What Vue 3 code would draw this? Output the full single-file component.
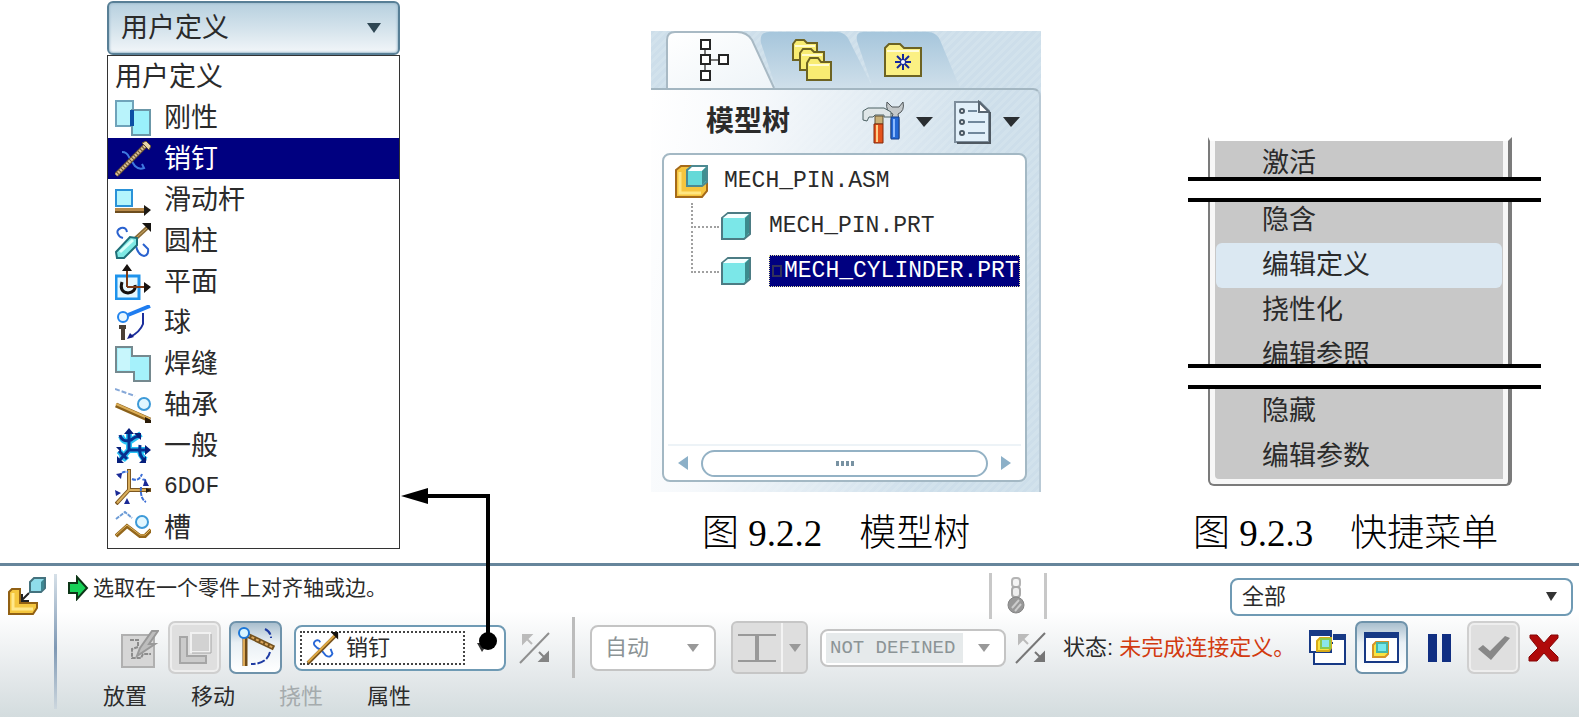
<script setup>
import { ref } from 'vue'

const joints = [
  { name: '用户定义', icon: '' },
  { name: '刚性', icon: 'rigid' },
  { name: '销钉', icon: 'pin' },
  { name: '滑动杆', icon: 'slider' },
  { name: '圆柱', icon: 'cylinder' },
  { name: '平面', icon: 'planar' },
  { name: '球', icon: 'ball' },
  { name: '焊缝', icon: 'weld' },
  { name: '轴承', icon: 'bearing' },
  { name: '一般', icon: 'general' },
  { name: '6DOF', icon: 'dof' },
  { name: '槽', icon: 'slot' }
]
const highlighted = ref('销钉')

const menuParts = [
  { id: 'first', items: ['激活'] },
  { id: 'middle', items: ['隐含', '编辑定义', '挠性化', '编辑参照'] },
  { id: 'last', items: ['隐藏', '编辑参数'] }
]

const panels = [
  { name: '放置' },
  { name: '移动' },
  { name: '挠性', disabled: true },
  { name: '属性' }
]

const icons = {
  rigid: `<rect x="1" y="1" width="17" height="25" fill="#b9f3fb" stroke="#6fa3ba" stroke-width="2"/>
    <rect x="17" y="10" width="18" height="25" fill="#9af0fb" stroke="#6b97a8" stroke-width="2"/>
    <rect x="15" y="10" width="4" height="16" fill="#0b4fa5"/>`,
  pin: `<path d="M7 11q5 0 7 5l6 9q4 4 9 2l-2-4" fill="none" stroke="#3f79e0" stroke-width="2"/>
    <path d="M1 34L31 4" stroke="#6b5332" stroke-width="5"/>
    <path d="M1 34L31 4" stroke="#d8bf94" stroke-width="3" stroke-dasharray="2 1"/>
    <path d="M27 2l4-2 5 5-2 4z" fill="#e6d3a8" stroke="#5c4a30"/>`,
  slider: `<rect x="1" y="8" width="16" height="16" fill="#b4f5fd" stroke="#2a92d8" stroke-width="2"/>
    <rect x="0" y="26" width="30" height="5" fill="#b88a4a"/>
    <path d="M0 30h30" stroke="#6d4d1e" stroke-width="2"/>
    <path d="M29 23l7 5-7 6z" fill="#1e1a14"/>`,
  cylinder: `<path d="M12 9q-1-5-6-4-5 2-3 6 1 3 5 4M21 23q2 9 8 10 5-1 4-7l-5-5" fill="none" stroke="#2a62cf" stroke-width="2"/>
    <path d="M20 16L33 4" stroke="#8a6b36" stroke-width="4"/><path d="M20 16L33 4" stroke="#d7b36a" stroke-width="1"/>
    <path d="M27 0h9v9z" fill="#16130f"/>
    <path d="M1 29L15 14l7 1v7L9 35H2z" fill="#7fe9e4" stroke="#1f6f78" stroke-width="2"/>
    <path d="M5 29L18 17" stroke="#d8fffb" stroke-width="3"/>`,
  planar: `<rect x="1" y="12" width="23" height="23" fill="#e4f8ff" stroke="#1e93ec" stroke-width="3"/>
    <path d="M7 18q-3 10 6 11 8-1 7-8" fill="none" stroke="#14110f" stroke-width="3"/>
    <path d="M12 23V4M12 23h19" stroke="#7a3a16" stroke-width="2"/>
    <path d="M7 7l5-7 5 7zM29 18l7 5-7 6z" fill="#181310"/>`,
  ball: `<path d="M13 10L35 1" stroke="#1f7df0" stroke-width="4"/>
    <circle cx="8" cy="12" r="5" fill="#e8f7ff" stroke="#2385ee" stroke-width="2"/>
    <path d="M4 22h7M8 22v13" stroke="#4a4036" stroke-width="4"/>
    <path d="M28 8v11q-3 8-13 13" fill="none" stroke="#1b2f9c" stroke-width="2"/>
    <path d="M12 34l3-6 4 4z" fill="#15208a"/>`,
  weld: `<path d="M1 1h16v9h18v25H19v-9H1z" fill="#a5f1fb" stroke="#75898f" stroke-width="2"/><path d="M3 3h12v21H3z" fill="#c8f6fc"/>`,
  bearing: `<path d="M0 2l20 7" stroke="#86a8d8" stroke-width="2" stroke-dasharray="5 2"/>
    <circle cx="29" cy="17" r="6" fill="#e1f7ff" stroke="#3d9ad8" stroke-width="2"/>
    <path d="M1 18l34 15" stroke="#8a601a" stroke-width="5"/>
    <path d="M1 17l34 15" stroke="#dcae58" stroke-width="2"/><path d="M30 30l6 3v3h-6z" fill="#2b1c08"/>`,
  general: `<g stroke="#27c2f4" stroke-width="6" fill="none"><path d="M14 4v20M14 22h18M6 31l8-9M14 14l12-8M25 20q-1 8 6 12M6 8q2 6 8 6M4 23l8 9"/></g>
    <g stroke="#08308f" stroke-width="3" fill="none"><path d="M14 3v19h18M14 22L4 33M5 7q2 8 11 5 6-5 9-3M25 17q-2 12 6 16M4 23l8 8"/></g>
    <path d="M9 6l5-6 5 6zM30 17l6 5-6 5zM2 28v7h7zM19 5l7 0v7zM31 28v7h-7zM1 19h5v5z" fill="#061f7c"/>`,
  dof: `<path d="M14 0v21h22M14 21L1 35" stroke="#7d5720" stroke-width="4" fill="none"/>
    <path d="M14 1v20h20M14 21L2 34" stroke="#d9ae5c" stroke-width="2" fill="none"/>
    <path d="M4 8q2-6 9-5M17 10q7 3 10-5M31 17q1-8-4-6M26 18q-1 12 5 15" fill="none" stroke="#3d6fd6" stroke-width="2" stroke-dasharray="4 1"/>
    <path d="M1 5l5 5 1-6zM30 10l4 7h-6zM0 21l6 3-5 3zM9 35l3-6 3 6z" fill="#1b2a96"/><path d="M31 19l5 2-5 3z" fill="#2c200f"/>`,
  slot: `<path d="M1 9l9-7 7 6" fill="none" stroke="#6c9bd6" stroke-width="2" stroke-dasharray="4 1"/>
    <circle cx="27" cy="12" r="6" fill="#e1f7ff" stroke="#3d9ad8" stroke-width="2"/>
    <path d="M1 26l11-10 13 10h5l6-6" fill="none" stroke="#94671c" stroke-width="4"/>
    <path d="M1 25l11-10 13 10h5l6-6" fill="none" stroke="#e0b661" stroke-width="1"/>`
}
</script>

<template>
  <main class="page">
    <section class="figures">
      <div class="joint-figure">
        <div class="combo-head">
          <select class="combo-select" aria-label="连接类型">
            <option>用户定义</option>
          </select>
          <svg class="chevron" viewBox="0 0 14 10" width="14" height="10" aria-hidden="true"><path d="M0 0h14L7 10z" fill="#2f4754" /></svg>
        </div>
        <ul class="joint-list">
          <li v-for="joint in joints" :key="joint.name">
            <button class="joint" :class="{ active: joint.name === highlighted }" @click="highlighted = joint.name">
              <svg v-if="joint.icon" viewBox="0 0 36 36" width="36" height="36" aria-hidden="true" v-html="icons[joint.icon]"></svg>
              <span :class="{ latin: joint.name === '6DOF' }">{{ joint.name }}</span>
            </button>
          </li>
        </ul>
        <svg class="callout" viewBox="0 0 100 170" width="100" height="170" aria-hidden="true">
          <path d="M24 12H88V157" fill="none" stroke="#000" stroke-width="4" />
          <path d="M1 12L28 4v16z" />
          <circle cx="88" cy="157" r="9" />
        </svg>
      </div>

      <figure class="tree-figure">
        <div class="tree-panel">
          <div class="tabs">
            <svg class="tab-shapes" viewBox="0 0 390 57" width="390" height="57" aria-hidden="true">
              <defs>
                <linearGradient id="tabFade" x1="0" y1="0" x2="0" y2="1"><stop offset="0" stop-color="#a6c6dc" /><stop offset="1" stop-color="#cfdfea" /></linearGradient>
                <linearGradient id="tabOpen" x1="0" y1="0" x2="1" y2="1"><stop offset="0" stop-color="#ffffff" /><stop offset="1" stop-color="#eef4f8" /></linearGradient>
              </defs>
              <path d="M222 57L206 10q-2-9 6-9h65q8 0 12 8l20 48z" fill="url(#tabFade)" />
              <path d="M125 57L110 12q-2-11 8-11h68q8 0 12 8l24 48z" fill="url(#tabFade)" />
              <path d="M16 57V9q0-8 8-8h62q10 0 15 8l22 48z" fill="url(#tabOpen)" />
              <path d="M16 57V9q0-8 8-8h62q10 0 15 8l22 48" fill="none" stroke="#a8b9c4" stroke-width="2" />
            </svg>
            <button class="tab" aria-label="模型树">
              <svg viewBox="0 0 32 44" width="32" height="44"><path d="M6 10v24M6 22h16" stroke="#777" stroke-width="2" /><g fill="#fff" stroke="#252525" stroke-width="2"><rect x="2" y="2" width="9" height="9" /><rect x="2" y="17" width="9" height="9" /><rect x="2" y="33" width="9" height="9" /><rect x="20" y="17" width="9" height="9" /></g></svg>
            </button>
            <button class="tab" aria-label="文件夹浏览器">
              <svg viewBox="0 0 42 44" width="42" height="44"><g fill="#f8ec72" stroke="#6d6322" stroke-width="2"><path d="M2 22V6l3-4h8l3 3h10v17z" /><path d="M9 32V15l3-4h8l3 3h10v18z" /><path d="M16 42V25l3-5h8l3 4h10v18z" /></g><path d="M18 27h20M11 17h20M4 8h20" stroke="#fffbd0" stroke-width="2" /></svg>
            </button>
            <button class="tab" aria-label="收藏夹">
              <svg viewBox="0 0 40 36" width="40" height="36"><path d="M2 34V6l4-4h11l4 4h17v28z" fill="#fbf083" stroke="#6d6322" stroke-width="2" /><path d="M4 9h32" stroke="#fffcd8" stroke-width="2" /><path d="M20 12v16M12 20h16M14 14l12 12M26 14L14 26" stroke="#16289c" stroke-width="2" /><circle cx="20" cy="20" r="2" fill="#fff" /></svg>
            </button>
          </div>

          <div class="tree-body">
            <div class="tree-header">
              <h2>模型树</h2>
              <button class="tool" aria-label="设置">
                <svg viewBox="0 0 42 46" width="42" height="46"><path d="M25 3q-2 10 6 12l-2 6v18h8V21l-1-6q7-3 5-12l-4 5h-7z" fill="#c3c8ca" stroke="#50575a" /><path d="M29 18h8v22h-8z" fill="#2468d4" stroke="#153e8d" /><path d="M32 20v18" stroke="#8cbaff" stroke-width="2" /><path d="M1 12l5-3h16l7 4v5h-7v-2h-9l-2 2H7l-2 4-4-1z" fill="#dfe6e8" stroke="#4c6163" /><path d="M13 17h8v8h-8z" fill="#c9b078" stroke="#635335" /><path d="M12 25h9v19h-9z" fill="#e4531c" stroke="#82280b" /><path d="M15 26v17" stroke="#ffd08a" stroke-width="2" /></svg>
                <svg viewBox="0 0 17 10" width="17" height="10"><path d="M0 0h17L8 10z" fill="#2a2e31" /></svg>
              </button>
              <button class="tool" aria-label="显示">
                <svg viewBox="0 0 38 44" width="38" height="44"><path d="M2 2h25l9 9v31H2z" fill="#e2f0fa" stroke="#7d8d9b" stroke-width="2" /><path d="M26 2v10h10z" fill="#fff" stroke="#596672" stroke-width="2" /><path d="M37 12v31H4" fill="none" stroke="#4f5962" stroke-width="2" /><g fill="#fff" stroke="#4b5965" stroke-width="2"><circle cx="9" cy="11" r="2" /><circle cx="9" cy="22" r="2" /><circle cx="9" cy="33" r="2" /></g><path d="M15 11h9M15 22h17M15 33h17" stroke="#71889c" stroke-width="2" /></svg>
                <svg viewBox="0 0 17 10" width="17" height="10"><path d="M0 0h17L8 10z" fill="#2a2e31" /></svg>
              </button>
            </div>

            <div class="tree-box">
              <ul class="tree">
                <li>
                  <button class="node">
                    <svg viewBox="0 0 34 34" width="34" height="34" aria-hidden="true"><path d="M1 6l5-4h26v25l-5 6H1z" fill="#f6c53e" stroke="#a56a19" stroke-width="2" /><path d="M5 8v21h21" fill="none" stroke="#ffe681" stroke-width="3" /><path d="M12 6l5-4h15v16l-5 4H12z" fill="#65d9d8" stroke="#4d8a92" stroke-width="2" /><path d="M13 7l4-4h14l-4 4z" fill="#fff" /><path d="M27 7l4-4v14l-4 4z" fill="#3f9092" /></svg>
                    <span>MECH_PIN.ASM</span>
                  </button>
                  <ul class="branch">
                    <li>
                      <button class="node">
                        <svg viewBox="0 0 30 30" width="30" height="30" aria-hidden="true"><path d="M1 7l6-5h22v21l-6 5H1z" fill="#7be7e8" stroke="#4c7c84" stroke-width="2" /><path d="M2 7l5-4h21l-5 4z" fill="#f5ffff" /><path d="M24 7l4-4v19l-4 5z" fill="#3c8b8d" /></svg>
                        <span>MECH_PIN.PRT</span>
                      </button>
                    </li>
                    <li>
                      <button class="node">
                        <svg viewBox="0 0 30 30" width="30" height="30" aria-hidden="true"><path d="M1 7l6-5h22v21l-6 5H1z" fill="#7be7e8" stroke="#4c7c84" stroke-width="2" /><path d="M2 7l5-4h21l-5 4z" fill="#f5ffff" /><path d="M24 7l4-4v19l-4 5z" fill="#3c8b8d" /></svg>
                        <span class="selected"><i class="marker"></i>MECH_CYLINDER.PRT</span>
                      </button>
                    </li>
                  </ul>
                </li>
              </ul>
              <div class="scroller">
                <button aria-label="向左滚动"><svg viewBox="0 0 10 14" width="10" height="14"><path d="M10 0v14L0 7z" fill="#8cb0c8" /></svg></button>
                <div class="thumb"><i></i><i></i><i></i><i></i></div>
                <button aria-label="向右滚动"><svg viewBox="0 0 10 14" width="10" height="14"><path d="M0 0v14l10-7z" fill="#8cb0c8" /></svg></button>
              </div>
            </div>
          </div>
        </div>
        <figcaption>图 9.2.2　模型树</figcaption>
      </figure>

      <figure class="menu-figure">
        <template v-for="(part, index) in menuParts" :key="part.id">
          <div v-if="index" class="cut"></div>
          <ul class="menu" :class="part.id">
            <li v-for="item in part.items" :key="item">
              <button class="menu-item" :class="{ hovered: item === '编辑定义' }">{{ item }}</button>
            </li>
          </ul>
        </template>
        <figcaption>图 9.2.3　快捷菜单</figcaption>
      </figure>
    </section>

    <section class="dashboard">
      <div class="feature">
        <svg viewBox="0 0 38 40" width="38" height="40" aria-hidden="true"><path d="M1 16l3-3h8v14h17v5l-4 6H1z" fill="#f4c63e" stroke="#916013" stroke-width="2" /><path d="M5 17v16h20" fill="none" stroke="#ffe88a" stroke-width="3" /><path d="M22 6l4-4h11v10l-4 4H22z" fill="#8fdcea" stroke="#44727e" stroke-width="2" /><path d="M33 6l3-3v9l-3 3z" fill="#3d8792" /><path d="M21 17l-7 7M14 18v7h7" fill="none" stroke="#222" stroke-width="2" /></svg>
      </div>
      <div class="rule"></div>

      <div class="rows">
        <div class="message-row">
          <p class="message">
            <svg viewBox="0 0 22 26" width="22" height="26" aria-hidden="true"><path d="M2 8h8V2l10 11-10 11v-6H2z" fill="#17d257" stroke="#0d3617" stroke-width="2" /></svg>
            <span>选取在一个零件上对齐轴或边。</span>
          </p>
          <div class="regen">
            <svg viewBox="0 0 18 38" width="18" height="38" aria-hidden="true"><rect x="5" y="1" width="8" height="9" rx="3" fill="#f4f4f4" stroke="#b4b4b4" stroke-width="2" /><rect x="5" y="10" width="8" height="10" rx="3" fill="#eee" stroke="#a9a9a9" stroke-width="2" /><circle cx="9" cy="28" r="8" fill="#989898" stroke="#858585" /><path d="M5 31l7-8M8 34l6-7" stroke="#ccc" stroke-width="2" /></svg>
          </div>
          <div class="field filter">
            <select aria-label="过滤器"><option>全部</option></select>
            <svg class="chevron" viewBox="0 0 11 9" width="11" height="9" aria-hidden="true"><path d="M0 0h11L5 9z" fill="#333" /></svg>
          </div>
        </div>

        <div class="tool-row">
          <button class="plain wide" disabled aria-label="手动放置">
            <svg viewBox="0 0 38 40" width="38" height="40"><path d="M1 7h32v32H1z" fill="#d6d6d6" stroke="#b0b0b0" stroke-width="2" /><path d="M9 12h8v7l-6 2v9h9l2-4h8" fill="none" stroke="#8b8b8b" stroke-width="2" stroke-dasharray="4 1" /><path d="M19 20L31 3h6L28 16h6L16 28z" fill="#bdbdbd" stroke="#999" stroke-width="2" /></svg>
          </button>
          <button class="square muted" disabled aria-label="界面放置">
            <svg viewBox="0 0 34 34" width="34" height="34"><path d="M2 6h7v19h19v7H2z" fill="#cbcbcb" stroke="#a6a6a6" stroke-width="2" /><rect x="13" y="2" width="19" height="19" fill="#d2d2d2" stroke="#f1f1f1" stroke-width="2" /><path d="M14 22h19V3" fill="none" stroke="#a4a4a4" /></svg>
          </button>
          <button class="square pressed gap-s" aria-label="转换约束">
            <svg viewBox="0 0 40 42" width="40" height="42"><path d="M9 11v28" stroke="#6e4a17" stroke-width="5" /><path d="M8 11v28" stroke="#dda957" stroke-width="2" /><path d="M11 8l27 13" stroke="#74521e" stroke-width="5" /><path d="M11 8l27 13" stroke="#dba65a" stroke-width="2" stroke-dasharray="3 2" /><circle cx="8" cy="6" r="5" fill="#d9f5ff" stroke="#1b76d8" stroke-width="2" /><path d="M29 2q6 3 6 9M34 25q-3 12-19 12" fill="none" stroke="#1e3ba3" stroke-width="2" stroke-dasharray="8 2" /></svg>
          </button>
          <div class="field joint-field gap-m">
            <div class="focus">
              <svg viewBox="0 0 36 36" width="34" height="34" aria-hidden="true"><path d="M15 12q-1-3-4-2-4 2-2 5 2 3 7 5l5 6q5 3 7-2l-2-5" fill="none" stroke="#2867d7" stroke-width="2" /><path d="M2 34L31 5" stroke="#79531e" stroke-width="4" /><path d="M2 33L31 4" stroke="#e2ac45" stroke-width="2" /><path d="M26 1h8v8z" fill="#16130f" /></svg>
              <select aria-label="当前连接"><option>销钉</option></select>
            </div>
            <svg class="chevron" viewBox="0 0 11 9" width="11" height="9" aria-hidden="true"><path d="M0 0h11L5 9z" fill="#333" /></svg>
          </div>
          <button class="plain gap-m" disabled aria-label="反向连接">
            <svg viewBox="0 0 34 34" width="34" height="34"><path d="M2 32L31 2" stroke="#8f8f8f" stroke-width="2" /><path d="M5 4h8L5 12zM7 6l7 7" fill="#bbb" stroke="#bbb" stroke-width="2" /><path d="M30 30h-8l8-8zM28 28l-7-7" fill="#848484" stroke="#848484" stroke-width="2" /></svg>
          </button>
          <div class="divider"></div>
          <div class="field off auto-field">
            <select disabled aria-label="约束类型"><option>自动</option></select>
            <svg class="chevron" viewBox="0 0 12 8" width="12" height="8" aria-hidden="true"><path d="M0 0h12L6 8z" fill="#999" /></svg>
          </div>
          <div class="split gap-l">
            <button disabled aria-label="偏移方式"><svg viewBox="0 0 40 30" width="40" height="30"><path d="M1 2h38M1 28h38" stroke="#999" stroke-width="2" /><path d="M20 2v26" stroke="#999" stroke-width="4" /></svg></button>
            <button class="more" disabled aria-label="更多偏移方式"><svg viewBox="0 0 12 8" width="12" height="8"><path d="M0 0h12L6 8z" fill="#999" /></svg></button>
          </div>
          <div class="field off offset-field gap-m">
            <input disabled value="NOT DEFINED" aria-label="偏移值">
            <svg class="chevron" viewBox="0 0 12 8" width="12" height="8" aria-hidden="true"><path d="M0 0h12L6 8z" fill="#999" /></svg>
          </div>
          <button class="plain gap-s" disabled aria-label="反向约束">
            <svg viewBox="0 0 34 34" width="34" height="34"><path d="M2 32L31 2" stroke="#777" stroke-width="2" /><path d="M5 4h8L5 12zM7 6l7 7" fill="#bbb" stroke="#bbb" stroke-width="2" /><path d="M30 30h-8l8-8zM28 28l-7-7" fill="#757575" stroke="#757575" stroke-width="2" /></svg>
          </button>
          <p class="status gap-l"><span>状态:</span><strong>未完成连接定义。</strong></p>
          <div class="actions">
            <button class="plain" aria-label="单独窗口">
              <svg viewBox="0 0 38 36" width="38" height="36"><path d="M5 13h31v21H5z" fill="#fff" stroke="#173985" stroke-width="2" /><path d="M24 4h13v6H24z" fill="#173985" /><path d="M24 10h11v5H24z" fill="#fff" /><path d="M36 8v8" stroke="#173985" stroke-width="2" /><path d="M1 1h21v21H1z" fill="#fff" stroke="#173985" stroke-width="2" /><path d="M0 0h23v6H0z" fill="#173985" /><path d="M8 11l3-3h11v10l-2 3H8z" fill="#f9e442" stroke="#d7ab18" stroke-width="2" /><path d="M12 9h9v9h-9z" fill="#8be5ea" stroke="#8bc94d" stroke-width="2" /></svg>
            </button>
            <button class="square pressed" aria-label="组件窗口">
              <svg viewBox="0 0 36 32" width="36" height="32"><path d="M1 1h33v29H1z" fill="#fff" stroke="#173985" stroke-width="2" /><path d="M0 0h35v6H0z" fill="#173985" /><path d="M9 13l3-3h12v12l-3 3H9z" fill="#f9e442" stroke="#d69428" stroke-width="2" /><path d="M13 11h10v9H13z" fill="#75e8ee" stroke="#45b7a8" stroke-width="2" /></svg>
            </button>
            <button class="plain gap-x" aria-label="暂停"><svg viewBox="0 0 24 28" width="24" height="28"><path d="M0 0h9v28H0zM14 0h9v28h-9z" fill="#112f82" /></svg></button>
            <button class="square muted gap-l" disabled aria-label="确定"><svg viewBox="0 0 34 26" width="34" height="26"><path d="M1 14l5-4 7 6L28 1l5 2L14 25z" fill="#888" /></svg></button>
            <button class="plain gap-s" aria-label="取消"><svg viewBox="0 0 32 28" width="32" height="28"><path d="M2 1h7l7 8 7-8h7v3l-9 10 9 9v4h-7l-7-8-7 8H1v-4l9-9L2 4z" fill="#b00a0a" stroke="#850606" /></svg></button>
          </div>
        </div>

        <nav class="panel-row">
          <button v-for="panel in panels" :key="panel.name" :disabled="panel.disabled">{{ panel.name }}</button>
        </nav>
      </div>
    </section>
  </main>
</template>

<style>
body {
  background: #fff;
}
</style>

<style scoped>
.page {
  font-family: "Liberation Sans", "Noto Sans CJK SC", sans-serif;
  color: #2b2b2b;
  font-size: 22px;
}

.page * {
  box-sizing: border-box;
}

.page svg {
  display: block;
  flex: none;
}

button,
select,
input {
  font: inherit;
  color: inherit;
  border: 0;
  padding: 0;
  margin: 0;
  background: none;
  appearance: none;
}

select {
  opacity: 1;
  outline: 0;
}

ul,
figure,
h2,
p {
  margin: 0;
  padding: 0;
  list-style: none;
}

.figures {
  display: grid;
  grid-template-columns: 107fr 293fr 251fr 390fr 147fr 353fr 38fr;
  align-items: start;
  padding-bottom: 7px;
}

/* connection type list */
.joint-figure {
  grid-column: 2;
  position: relative;
  padding-top: 1px;
  font-size: 27px;
}

.combo-head {
  display: flex;
  align-items: center;
  height: 54px;
  padding: 0 17px 0 12px;
  border: 2px solid #587f96;
  border-radius: 6px;
  background: linear-gradient(#b7d0df, #d3e2eb 50%, #f2f6f9);
  box-shadow: inset 0 0 2px 1px #a3bfd0;
}

.combo-select {
  flex: 1;
  height: 44px;
}

.joint-list {
  border: 1px solid #333;
  background: #fff;
}

.joint {
  display: flex;
  align-items: center;
  gap: 13px;
  width: 100%;
  height: 41px;
  padding-left: 7px;
  line-height: 40px;
}

.joint.active {
  background: #000080;
  color: #fff;
}

.latin {
  font-family: "Liberation Mono", monospace;
  font-size: 23px;
}

.callout {
  position: absolute;
  left: 100%;
  top: 484px;
  z-index: 2;
  pointer-events: none;
}

/* model tree */
.tree-figure {
  grid-column: 4;
  padding-top: 31px;
}

.tree-panel {
  background: repeating-linear-gradient(135deg, #cddeea 0 3px, #d2e2ec 3px 6px);
}

.tabs {
  position: relative;
  display: flex;
  align-items: center;
  height: 57px;
  padding-left: 48px;
}

.tab-shapes {
  position: absolute;
  left: 0;
  top: 0;
}

.tab {
  position: relative;
  display: flex;
  width: 92px;
}

.tree-body {
  padding: 0 12px 10px 11px;
  border-top: 2px solid #a3b6c1;
  border-right: 2px solid #b9cad6;
  border-top-right-radius: 8px;
  background: linear-gradient(100deg, #fff 0, #f5f8fb 25%, rgba(255, 255, 255, 0) 75%);
}

.tree-header {
  display: flex;
  align-items: center;
  gap: 20px;
  height: 63px;
  padding: 0 7px 0 44px;
}

.tree-header h2 {
  flex: 1;
  font-size: 28px;
  line-height: 40px;
  font-weight: 700;
  white-space: nowrap;
}

.tool {
  display: flex;
  align-items: center;
  gap: 12px;
}

.tree-box {
  display: flex;
  flex-direction: column;
  min-height: 329px;
  border: 2px solid #a3b8c4;
  border-radius: 8px;
  background: #fff;
}

.tree {
  flex: 1;
  padding: 3px 0 0 11px;
  font-family: "Liberation Mono", monospace;
  font-size: 23px;
}

.node {
  display: flex;
  align-items: center;
  gap: 15px;
  height: 45px;
  white-space: nowrap;
}

.branch {
  padding-left: 16px;
}

.branch li {
  display: flex;
  align-items: center;
  height: 45px;
}

.branch li::before {
  content: "";
  align-self: flex-start;
  width: 26px;
  height: 23px;
  margin-right: 2px;
  border-left: 2px dotted #a0a0a0;
  border-bottom: 2px dotted #a0a0a0;
}

.branch li:last-child::before {
  height: 45px;
  margin-top: -22px;
}

.branch .node {
  gap: 18px;
}

.selected {
  display: flex;
  align-items: center;
  gap: 2px;
  height: 32px;
  padding-left: 2px;
  border: 1px dotted #e2e29a;
  background: #000080;
  color: #fff;
}

.marker {
  width: 10px;
  height: 12px;
  border: 2px solid #32325a;
}

.scroller {
  display: flex;
  align-items: center;
  gap: 13px;
  height: 36px;
  margin: 0 4px;
  padding: 0 10px;
  border-top: 2px solid #edf3f7;
}

.thumb {
  display: flex;
  flex: 1;
  align-items: center;
  justify-content: center;
  gap: 2px;
  height: 27px;
  border: 2px solid #94b2c5;
  border-radius: 14px;
}

.thumb i {
  width: 3px;
  height: 5px;
  background: #7892a2;
}

figcaption {
  font-family: "Liberation Serif", "Noto Sans CJK SC", serif;
  font-size: 37px;
  font-weight: 300;
  line-height: 44px;
  color: #000;
  white-space: nowrap;
}

.tree-figure figcaption {
  padding: 20px 0 0 51px;
}

/* shortcut menu */
.menu-figure {
  grid-column: 6;
  padding-top: 137px;
}

.menu {
  margin: 0 29px 0 20px;
  overflow: hidden;
  border: solid #7b7b7b;
  border-width: 0 4px 0 2px;
  background: #c8c8c8;
  box-shadow: inset 5px 0 0 #f7f7f7, inset -5px 0 0 #f7f7f7;
  font-size: 27px;
}

.menu.first {
  height: 40px;
  border-top: 4px solid #fff;
}

.menu.middle {
  height: 162px;
}

.menu.middle li:first-child {
  margin-top: -4px;
}

.menu.last {
  padding-bottom: 5px;
  border-bottom: 2px solid #7b7b7b;
  border-radius: 0 0 6px 6px;
  box-shadow: inset 5px -5px 0 #f7f7f7, inset -5px 0 0 #f7f7f7;
}

.menu li {
  padding: 0 6px;
}

.menu-item {
  display: block;
  width: 100%;
  height: 45px;
  padding-left: 46px;
  border-radius: 6px;
  line-height: 45px;
  text-align: left;
}

.menu-item.hovered {
  background: #dbe8f2;
}

.cut {
  height: 25px;
  border: solid #000;
  border-width: 4px 0;
  background: #fff;
}

.menu-figure figcaption {
  padding: 26px 0 0 5px;
}

/* dashboard */
.dashboard {
  display: flex;
  border-top: 3px solid #66859b;
  background: linear-gradient(#fff 30%, #e5e9eb 72%, #d3dcde);
  margin-bottom: 9px;
}

.feature {
  padding: 10px 8px 0;
}

.rule {
  width: 3px;
  margin: 8px 0;
  background: linear-gradient(#d6e0e8, #7e98b4 55%, #cdd7de);
}

.rows {
  flex: 1;
  min-width: 0;
}

.message-row {
  display: flex;
  align-items: center;
  height: 55px;
  padding: 0 6px 0 10px;
}

.message {
  display: flex;
  flex: 1;
  align-items: center;
  gap: 4px;
  padding-bottom: 12px;
  font-size: 21px;
  line-height: 30px;
  white-space: nowrap;
}

.regen {
  display: flex;
  align-items: center;
  justify-content: center;
  width: 58px;
  height: 46px;
  margin: 4px 183px 0 0;
  padding-right: 4px;
  border: solid #c8c8c8;
  border-width: 0 3px;
}

.field {
  display: flex;
  align-items: center;
  border: 2px solid #6f9ab4;
  border-radius: 8px;
  background: #fff;
}

.field select {
  flex: 1;
  height: 32px;
  min-width: 0;
}

.filter {
  width: 343px;
  height: 38px;
  margin-top: 6px;
  padding: 0 14px 0 10px;
}

.tool-row {
  display: flex;
  align-items: center;
  height: 53px;
  padding: 0 19px 0 60px;
}

.tool-row > * {
  flex: none;
}

.plain {
  display: flex;
  align-items: center;
  justify-content: center;
}

.plain.wide {
  width: 51px;
  justify-content: flex-start;
  padding-left: 4px;
}

.square {
  display: flex;
  align-items: center;
  justify-content: center;
  width: 53px;
  height: 53px;
  border-radius: 7px;
}

.square.muted {
  border: 2px solid #cfcfcf;
  background: #dfdfdf;
  box-shadow: inset 0 0 0 2px #eee;
}

.square.pressed {
  border: 2px solid #6f93ab;
  background: linear-gradient(#a9bfce, #e9f0f5 40%, #fff);
}

.gap-s {
  margin-left: 8px;
}

.gap-m {
  margin-left: 12px;
}

.gap-l {
  margin-left: 15px;
}

.gap-x {
  margin-left: 20px;
}

.joint-field {
  gap: 12px;
  width: 212px;
  height: 46px;
  padding: 0 16px 0 4px;
}

.focus {
  display: flex;
  flex: 1;
  align-items: center;
  gap: 6px;
  height: 34px;
  padding-left: 4px;
  border: 2px dotted #444;
}

.focus select {
  height: 28px;
  line-height: 28px;
}

.divider {
  width: 3px;
  height: 61px;
  margin: 0 15px 0 20px;
  background: #bcbcbc;
}

.field.off {
  border-color: #c4c4c4;
  color: #8c9496;
}

.auto-field {
  width: 126px;
  height: 46px;
  padding: 0 15px 0 13px;
}

.split {
  display: flex;
  width: 77px;
  height: 53px;
  border: 2px solid #c6c6c6;
  border-radius: 6px;
  background: #dedede;
}

.split button {
  display: flex;
  flex: 1;
  align-items: center;
  justify-content: center;
}

.split .more {
  flex: none;
  width: 25px;
  border-left: 2px solid #f3f3f3;
}

.offset-field {
  width: 186px;
  height: 38px;
  padding: 0 14px 0 4px;
  justify-content: space-between;
}

.offset-field input {
  width: 137px;
  height: 30px;
  padding-left: 4px;
  background: #e6eaeb;
  font-family: "Liberation Mono", monospace;
  font-size: 19px;
}

.status {
  display: flex;
  gap: 6px;
  line-height: 32px;
  white-space: nowrap;
}

.status strong {
  font-weight: 400;
  color: #d23a10;
}

.actions {
  display: flex;
  align-items: center;
  margin-left: auto;
}

.actions .pressed {
  margin-left: 8px;
}

.panel-row {
  display: flex;
  gap: 44px;
  height: 43px;
  padding: 2px 0 0 46px;
}

.panel-row button {
  line-height: 41px;
}

.panel-row button:disabled {
  color: #a5abad;
}
</style>
